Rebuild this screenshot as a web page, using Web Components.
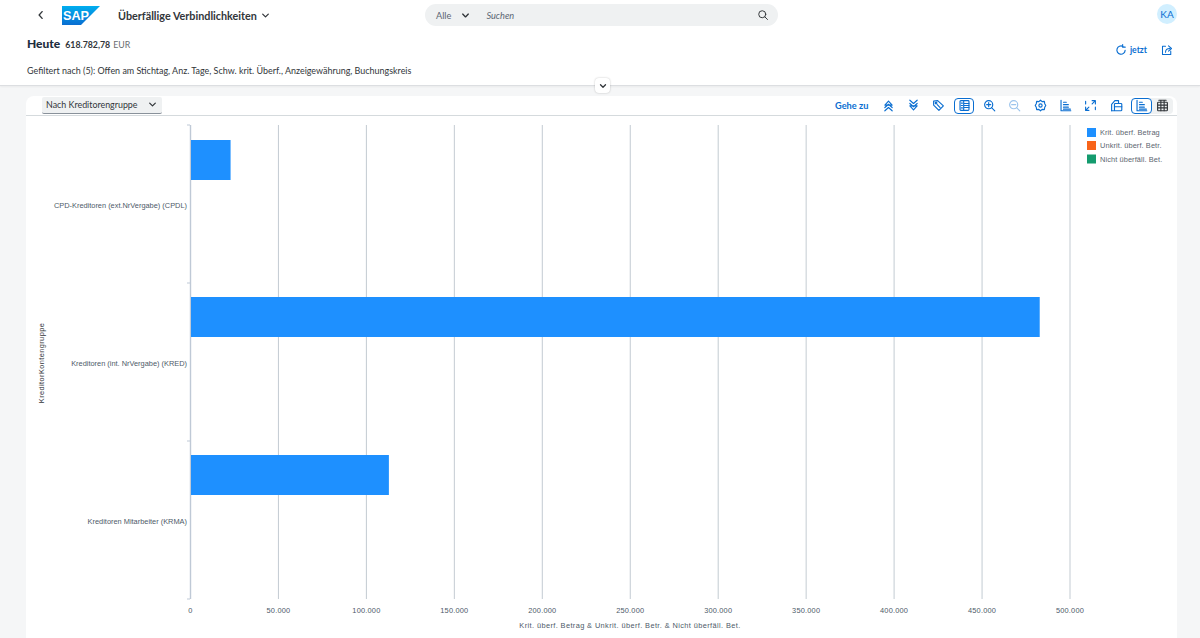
<!DOCTYPE html>
<html lang="de"><head><meta charset="utf-8"><title>Überfällige Verbindlichkeiten</title>
<style>
html,body{margin:0;height:638px;overflow:hidden;background:#f5f6f7;font-family:Lato,"Noto Sans",sans-serif;color:#32363a}
body{display:flex;flex-direction:column}
</style></head><body>
<app-header></app-header>
<chart-card></chart-card>
<script>
const I={
back:'<path d="M9.5 3.5 5.5 8l4 4.5"/>',
down:'<path d="M3 5.5 8 10.5 13 5.5"/>',
search:'<circle cx="7" cy="7" r="4.7"/><path d="M10.5 10.500 14 14"/>',
refresh:'<path d="M13.500 8.500A5.500 5.500 0 1 1 10.500 3.200"/><path d="M10.200.8v3.400h3.400"/>',
share:'<path d="M6 3H2v11h11V9.500"/><path d="M6 11c0-3.500 2-5 6-5"/><path d="M10 2.500l4 3.500-4 3.500"/>',
top:'<path d="M3.500 7.500L8 2.500l4.500 5zM3.500 10.500L8 6.500l4.500 4M3.500 14.500L8 10.500l4.500 4"/>',
bottom:'<path d="M3.500 8.500L8 13.500l4.500-5zM3.500 5.500L8 9.500l4.500-4M3.500 1.500L8 5.500l4.500-4"/>',
tag:'<path d="M2 2.500l5-.5 7 6.500-5.500 5.500L2 7.500z"/><circle cx="5" cy="5" r="1"/><path d="M6.500 7l3.500 3.500"/>',
table:'<rect x="2.500" y="2" width="11" height="12" rx="1"/><path d="M7 2v12M7 5.500h6.500M7 8h6.500M7 10.500h6.500M4 5h1.500M4 8h1.500M4 11h1.500"/>',
zin:'<circle cx="7" cy="7" r="5"/><path d="M10.500 10.500 14.500 14.500M4.500 7h5M7 4.500v5"/>',
zout:'<circle cx="7" cy="7" r="5"/><path d="M10.500 10.500 14.500 14.500M4.500 7h5"/>',
gear:'<path d="M8 1.500l2 1.800 2.700-.3.500 2.800L14.500 8l-1.300 2.200-.5 2.800-2.700-.3-2 1.800-2-1.800-2.700.3-.5-2.800L1.500 8l1.300-2.200.5-2.800 2.700.3z"/><circle cx="8" cy="8" r="2"/>',
axis:'<path d="M2.500 1.500v13h12M5.500 4h3.500M5.500 7h6M5.500 10h6M5.500 12.500h8.500"/>',
full:'<path d="M10 2h4v4M14 2l-4 4M6 14H2v-4M2 14l4-4M2 6V3M14 10v3"/>',
copy:'<path d="M2 14.500V6.500L6 2h4.500v3.500"/><rect x="5.500" y="5.500" width="9" height="9" rx="1"/><path d="M5.500 9.500h9M2 14.500h3.500"/>',
tbl:'<rect x="2" y="4" width="12" height="10.500" rx="1"/><path d="M2 7.500h12M2 11h12M6 4v10.500M10 4v10.500M6 1.500v2.500M10 1.500v2.500M3.500 1.500h9"/>'
};
const ic=(n,s=16,c='#0a6ed1',w=1.2)=>`<svg width="${s}" height="${s}" viewBox="0 0 16 16" fill="none" stroke="${c}" stroke-width="${w}" stroke-linecap="round" stroke-linejoin="round" style="display:block">${I[n]}</svg>`;

class AppHeader extends HTMLElement{constructor(){super();this.attachShadow({mode:'open'}).innerHTML=`<style>
:host{display:block;height:85px;background:#fff;border-bottom:1px solid #dcdee1;box-shadow:0 1px 2px rgba(0,0,0,.05);position:relative;flex:none}
.top{display:grid;grid-template-columns:425px 353px 1fr;height:32px;align-items:start}
.l{display:flex;align-items:center;height:30px;padding-left:35px}
.logo{margin-left:15px;display:block}
.title{margin-left:18px;font-size:10.800px;font-weight:700;color:#32363a;white-space:nowrap}
.r{display:flex;justify-content:flex-end;padding:4px 23px 0 0}
.av{width:20px;height:20px;border-radius:50%;background:#d1efff;color:#0a6ed1;font-size:10px;display:flex;align-items:center;justify-content:center}
.s{margin-top:4px;height:22px;border-radius:11px;background:#eff1f2;display:flex;align-items:center;padding:0 9px 0 11px;font-size:9.200px;color:#5b6672}
.s i{flex:1;margin-left:16px;color:#5b6672}
.s svg{flex:none}
.kpi{display:flex;justify-content:space-between;padding:3px 27px 0 27px;height:30px}
.h{display:flex;align-items:baseline;gap:5px;margin-top:1px}
.h b{font-size:12px;font-weight:900;color:#1d2d3e}.h strong{font-size:8.800px;font-weight:700;color:#32363a}.h span{font-size:8.800px;color:#6a6d70;margin-left:-2px}
.act{display:flex;align-items:center;gap:14px;height:21px;margin-top:4px}
.ref{display:flex;gap:3px;align-items:center;color:#0a6ed1;font-size:8.600px;font-weight:700}
.f{margin:0 0 0 27px;font-size:8.950px;line-height:12px;color:#32363a;white-space:nowrap}
.col{position:absolute;left:595px;top:78px;width:15px;height:15px;border-radius:4px;background:#fff;box-shadow:0 0 2px rgba(0,0,0,.25);display:flex;align-items:center;justify-content:center;z-index:2}
</style>
<div class="top">
<div class="l">${ic('back',12,'#32363a',1.8)}
<svg class="logo" width="38" height="19" viewBox="0 0 38 19"><defs><linearGradient id="g" x1="0" y1="0" x2="0" y2="1"><stop offset="0" stop-color="#00aeef"/><stop offset="1" stop-color="#0a6ed1"/></linearGradient></defs><path d="M0 0h38L19 19H0z" fill="url(#g)"/><text x="1" y="14" font-family="Liberation Sans" font-weight="700" font-size="13.500" fill="#fff" textLength="26" lengthAdjust="spacingAndGlyphs">SAP</text></svg>
<span class="title">Überfällige Verbindlichkeiten</span><span style="margin-left:4px">${ic('down',9,'#32363a',2.200)}</span></div>
<div class="s"><span>Alle</span><span style="margin-left:10px">${ic('down',9,'#32363a',2.400)}</span><i>Suchen</i>${ic('search',12,'#32363a',1.300)}</div>
<div class="r"><div class="av">KA</div></div>
</div>
<div class="kpi"><div class="h"><b>Heute</b><strong>618.782,78</strong><span>EUR</span></div>
<div class="act"><span class="ref">${ic('refresh',12,'#0a6ed1',1.500)}jetzt</span>${ic('share',12,'#0a6ed1',1.400)}</div></div>
<p class="f">Gefiltert nach (5): Offen am Stichtag, Anz. Tage, Schw. krit. Überf., Anzeigewährung, Buchungskreis</p>
<div class="col">${ic('down',8,'#32363a',2.600)}</div>`}}
customElements.define('app-header',AppHeader);

class ChartCard extends HTMLElement{constructor(){super();
const names=['top','bottom','tag','table','zin','zout','gear','axis','full','copy'];
const ticks=[0,50,100,150,200,250,300,350,400,450,500];
const X=v=>190.5+v*1.7590;
let grid='',lab='';
ticks.forEach(t=>{const x=X(t);grid+=`<line x1="${x}" x2="${x}" y1="9" y2="483" stroke="${t?'#a9b4be':'#bfc9d6'}" stroke-width="${t?.7:1.400}"/>`;
lab+=`<text x="${x}" y="497" text-anchor="middle" style="letter-spacing:.2px">${t?t+'.000':'0'}</text>`});
[9,167,325,483].forEach(y=>grid+=`<line x1="187" x2="190" y1="${y}" y2="${y}" stroke="#bfc9d6"/>`);
const bars=[[24,22.500],[181,482.500],[339,112.500]].map(([y,v])=>`<rect x="191" y="${y}" width="${v*1.759}" height="40" fill="#1e90ff"/>`).join('');
const cats=[['CPD-Kreditoren (ext.NrVergabe) (CPDL)',89],['Kreditoren (int. NrVergabe) (KRED)',247],['Kreditoren Mitarbeiter (KRMA)',405]].map(([t,y])=>`<text x="187" y="${y+2.500}" text-anchor="end">${t}</text>`).join('');
this.attachShadow({mode:'open'}).innerHTML=`<style>
:host{display:block;flex:1;margin:10px 23px 0 26px;background:#fff;border-radius:8px 8px 0 0;font-family:Lato,sans-serif}
.bar{display:flex;align-items:center;height:19px;border-bottom:1px solid #d5dadd;padding:0 4px 0 16px}
.sel{height:17px;width:120px;box-sizing:border-box;background:#eff1f2;border-bottom:1px solid #89919a;border-radius:2px;display:flex;align-items:center;justify-content:space-between;padding:0 5px 0 4px;font-size:8.900px;color:#32363a;margin-top:-1px}
.tools{margin-left:auto;display:flex;align-items:center}
.go{color:#0a6ed1;font-size:9.200px;font-weight:700;margin-right:10px;white-space:nowrap}
.b{width:20px;height:16px;margin-left:5.300px;display:flex;align-items:center;justify-content:center;box-sizing:border-box;border-radius:4px}
.b:first-of-type{margin-left:0}
.b.on{border:1px solid #0a6ed1;background:#fff}
.seg{display:flex;margin-left:5px;background:#eff1f2;border-radius:4px;height:16px}
.seg .b{margin:0;width:21px}
svg.c{display:block}
svg.c text{font-family:"Liberation Sans",sans-serif;font-size:7.400px;fill:#4d5a68}
.leg text{font-size:7.400px;fill:#5c6670!important;letter-spacing:.1px}
</style>
<div class="bar"><div class="sel"><span>Nach Kreditorengruppe</span>${ic('down',9,'#32363a',2.200)}</div>
<div class="tools"><span class="go">Gehe zu</span>
${names.map(n=>`<div class="b ${n=='table'?'on':''}">${ic(n,13,n=='zout'?'#9cc4ec':'#0a6ed1',1.400)}</div>`).join('')}
<div class="seg"><div class="b on">${ic('axis',13,'#0a6ed1',1.400)}</div><div class="b">${ic('tbl',13,'#32363a',1.400)}</div></div></div></div>
<svg class="c" width="1151" height="522" viewBox="26 0 1151 522" role="img">
${grid}${bars}${cats}${lab}
<text x="630" y="512" text-anchor="middle" style="letter-spacing:.39px">Krit. überf. Betrag &amp; Unkrit. überf. Betr. &amp; Nicht überfäll. Bet.</text>
<text transform="translate(44,247) rotate(-90)" text-anchor="middle" style="fill:#32363a;letter-spacing:.4px">KreditorKontengruppe</text>
<g class="leg">
<rect x="1087" y="12" width="9" height="9" fill="#1e90ff"/><text x="1100" y="18.500">Krit. überf. Betrag</text>
<rect x="1087" y="25" width="9" height="9" fill="#f8641a"/><text x="1100" y="32">Unkrit. überf. Betr.</text>
<rect x="1087" y="38.500" width="9" height="9" fill="#149b6e"/><text x="1100" y="45.500">Nicht überfäll. Bet.</text>
</g></svg>`}}
customElements.define('chart-card',ChartCard);
</script></body></html>
